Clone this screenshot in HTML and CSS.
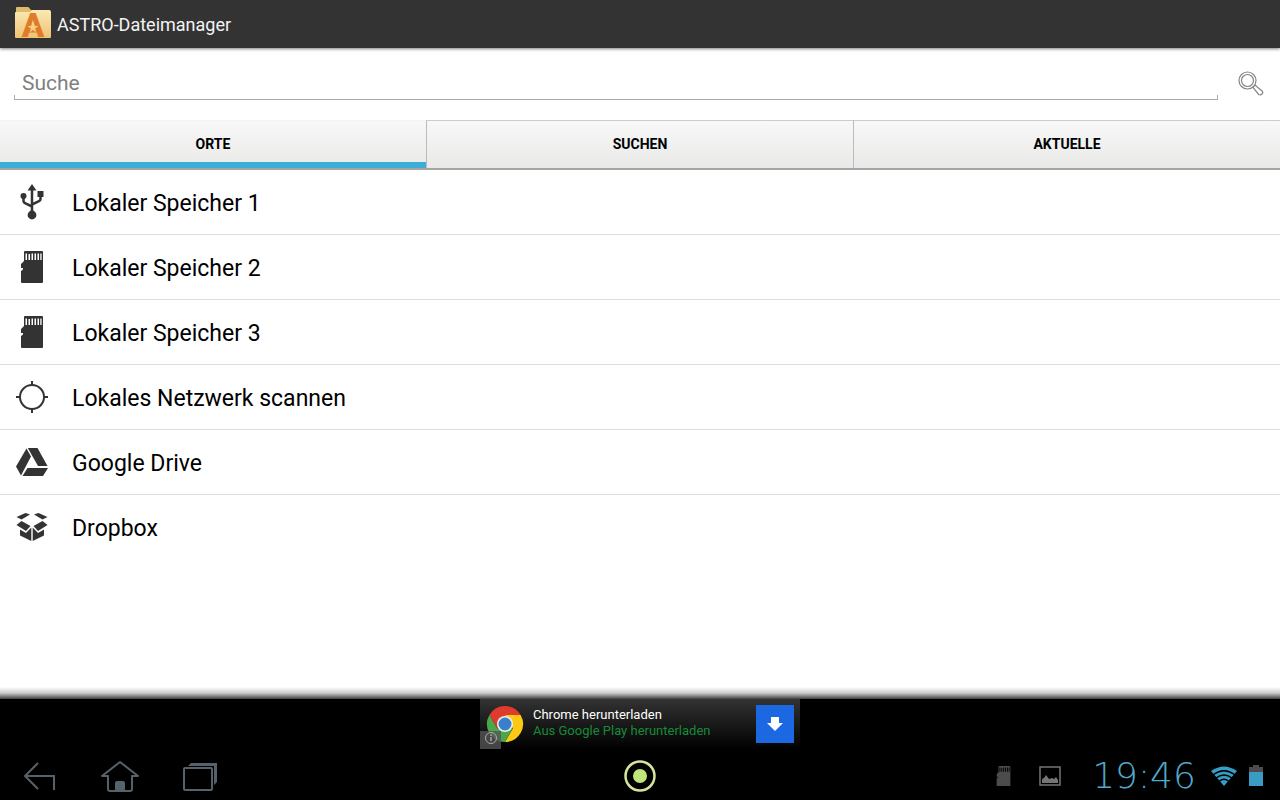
FILE: index.html
```
<!DOCTYPE html>
<html lang="de">
<head>
    <meta charset="UTF-8">
    <meta name="viewport" content="width=device-width, initial-scale=1.0">
    <title>ASTRO-Dateimanager</title>
    <link rel="stylesheet" href="styles.css">
</head>
<body>
    <!-- shared icon -->
    <svg class="sprite" aria-hidden="true">
        <symbol id="sd-card" viewBox="0 0 22 32">
            <path fill="currentColor" fill-rule="evenodd" d="M4 0H21Q22 0 22 1V31Q22 32 21 32H1Q0 32 0 31V20L2 18.500V17H0V13L3 10V1Q3 0 4 0ZM4.500 2.500V9H6V2.500ZM7.500 3V9H9V3ZM10.500 2.500V9H12V2.500ZM13.500 2.500V9H15V2.500ZM16.500 2.500V9H18V2.500ZM19.300 2.500V9H20.600V2.500Z"/>
        </symbol>
    </svg>

    <header class="app-bar">
        <svg class="app-logo" viewBox="0 0 38 34" aria-hidden="true">
            <defs>
                <linearGradient id="folder" x1="0" y1="0" x2="0" y2="1">
                    <stop offset="0" stop-color="#fbe9b4"/>
                    <stop offset="1" stop-color="#efc274"/>
                </linearGradient>
            </defs>
            <path fill="#dfb96c" d="M2 6V2Q2 1 3 1H14Q15 1 16 3L17 4H34Q36 4 36 6V12H2Z"/>
            <path fill="url(#folder)" d="M1 7Q1 6 2 6H16L18 4H35Q37 4 37 6V31Q37 32 36 32H2Q1 32 1 31Z"/>
            <text class="logo-letter" x="19" y="31" text-anchor="middle">A</text>
            <path fill="#f5d084" d="M19 16l1.300 4h4.200l-3.400 2.500 1.300 4-3.400-2.500-3.400 2.500 1.300-4-3.400-2.500h4.200z"/>
        </svg>
        <h1>ASTRO-Dateimanager</h1>
    </header>

    <form class="search">
        <div class="search-field">
            <input type="text" id="search" placeholder="Suche" aria-label="Suche">
        </div>
        <button type="button" class="search-button" aria-label="Suchen">
            <svg viewBox="0 0 26 26" fill="none" stroke="#858585" stroke-width="1.200">
                <circle cx="9.500" cy="9.500" r="8.500"/>
                <circle cx="9.500" cy="9.500" r="6"/>
                <path d="M15 16.500l2-2.500 7 6q1.500 1.500 0 3t-3.300.5z"/>
            </svg>
        </button>
    </form>

    <nav class="tabs">
        <button type="button" class="tab active">ORTE</button>
        <button type="button" class="tab">SUCHEN</button>
        <button type="button" class="tab">AKTUELLE</button>
    </nav>

    <main>
        <ul class="places">
            <li><a href="#">
                <svg class="place-icon" viewBox="0 0 32 36" fill="#333" stroke="#333">
                    <path stroke="none" d="M16 0l4.500 6.500h-9z"/>
                    <path stroke="none" d="M21.500 7h6v6h-6z"/>
                    <circle stroke="none" cx="7.500" cy="12" r="3"/>
                    <circle stroke="none" cx="16" cy="31" r="4.400"/>
                    <path fill="none" stroke-width="2.500" d="M16 5v24M7.500 12v5q0 1.500 1.500 2.200L16 22.500M24.500 12v3q0 1.500-1.500 2.200L16 20.500"/>
                </svg>
                <span>Lokaler Speicher 1</span>
            </a></li>
            <li><a href="#">
                <svg class="place-icon"><use href="#sd-card" x="5" y="2" width="22" height="32"/></svg>
                <span>Lokaler Speicher 2</span>
            </a></li>
            <li><a href="#">
                <svg class="place-icon"><use href="#sd-card" x="5" y="2" width="22" height="32"/></svg>
                <span>Lokaler Speicher 3</span>
            </a></li>
            <li><a href="#">
                <svg class="place-icon" viewBox="0 0 32 36" fill="none" stroke="#333" stroke-width="2">
                    <circle cx="16" cy="18" r="12"/>
                    <path d="M16 2v5M16 29v5M0 18h5M27 18h5"/>
                </svg>
                <span>Lokales Netzwerk scannen</span>
            </a></li>
            <li><a href="#">
                <svg class="place-icon" viewBox="0 0 32 36" fill="#333">
                    <path d="M10.500 4.500L15 12.500 5 31.500 0 22.500z"/>
                    <path d="M11.800 4H21.500L31.500 22H22z"/>
                    <path d="M11.500 24H32L27 32H6.500z"/>
                </svg>
                <span>Google Drive</span>
            </a></li>
            <li><a href="#">
                <svg class="place-icon" viewBox="0 0 32 36" fill="#333">
                    <path d="M.5 8L9.500 4 14 5.500 5.500 10.500zM31.500 8L22.500 4 18 5.500 26.500 10.500z"/>
                    <path d="M5.500 12L14.500 17 10 22 .5 16zM26.500 12L17.500 17 22 22 31.500 16z"/>
                    <path d="M4 20.500L10 24 15.300 18.500V32L4 26.500zM28 20.500L22 24 16.700 18.500V32L28 26.500z"/>
                </svg>
                <span>Dropbox</span>
            </a></li>
        </ul>
    </main>

    <div class="ad-strip">
        <a href="#" class="ad">
            <svg class="ad-logo" viewBox="0 0 44 50" aria-hidden="true">
                <path fill="#de3a2e" d="M25 25L17.200 29.500 9.400 16A18 18 0 0 1 40.600 16H25z"/>
                <path fill="#fbc914" d="M25 16H40.600A18 18 0 0 1 25 43L32.800 29.500z"/>
                <path fill="#4ba84a" d="M9.400 16A18 18 0 0 0 25 43L32.800 29.500 25 25 17.200 29.500z"/>
                <circle cx="25" cy="25" r="8" fill="#eee"/>
                <circle cx="25" cy="25" r="6.500" fill="#3a7fc9"/>
                <path fill="#555" fill-opacity=".8" d="M0 32H21V50H0z"/>
                <circle cx="11" cy="39" r="5.500" fill="none" stroke="#aaa"/>
                <path stroke="#aaa" stroke-width="1.500" d="M11 38v4M11 35.500v1.500"/>
            </svg>
            <span class="ad-text">
                <span class="ad-title">Chrome herunterladen</span>
                <span class="ad-source">Aus Google Play herunterladen</span>
            </span>
            <span class="ad-download">
                <svg viewBox="0 0 16 16" fill="#fff"><path d="M4 1h8v6h4l-8 8-8-8h4z"/></svg>
            </span>
        </a>
    </div>

    <footer class="system-bar">
        <div class="system-nav">
            <button type="button" aria-label="Zurück">
                <svg viewBox="0 0 40 34" fill="none" stroke="#56626a" stroke-width="2">
                    <path d="M18 4L5 17 18 30M5 17H34V31"/>
                </svg>
            </button>
            <button type="button" aria-label="Startseite">
                <svg viewBox="0 0 40 34" fill="none" stroke="#56626a" stroke-width="2">
                    <path stroke-linejoin="round" d="M20 3L2 17H8V30Q8 32 10 32H30Q32 32 32 30V17H38z"/>
                    <path fill="#56626a" stroke="none" d="M15 32V24Q15 22 17 22H23Q25 22 25 24V32z"/>
                </svg>
            </button>
            <button type="button" aria-label="Letzte Apps">
                <svg viewBox="0 0 40 34" fill="none" stroke="#56626a" stroke-width="2">
                    <rect x="4" y="9" width="28" height="22" rx="1"/>
                    <path fill="#56626a" stroke="none" d="M8 7L11 4H37V23L34 26V7z"/>
                </svg>
            </button>
        </div>
        <button type="button" class="center-button" aria-label="Menü">
            <svg viewBox="0 0 32 32">
                <circle cx="16" cy="16" r="14.500" fill="none" stroke="#d3e69b" stroke-width="2.500"/>
                <circle cx="16" cy="16" r="7" fill="#c0e57a"/>
            </svg>
        </button>
        <div class="status">
            <svg class="status-card"><use href="#sd-card" width="15" height="20"/></svg>
            <svg class="status-picture" viewBox="0 0 22 20">
                <rect x="1" y="1" width="20" height="18" fill="none" stroke="#757575" stroke-width="1.500"/>
                <path fill="#757575" d="M3 17V13L5 12 7 9 10 13 13 12 15 13 17 11 19 14V17z"/>
            </svg>
            <time class="clock">19:46</time>
            <svg class="status-wifi" viewBox="0 0 26 20">
                <path fill="#3a9cc4" d="M13 20L0 5Q13-4 26 5z"/>
                <path fill="none" stroke="#000" stroke-width="1.300" d="M2.500 8.500Q13 1 23.500 8.500M5 12Q13 6 21 12M8 15.500Q13 11 18 15.500"/>
            </svg>
            <svg class="status-battery" viewBox="0 0 14 21">
                <path fill="#4c4c4c" d="M4 0H10V2H14V7H0V2H4z"/>
                <path fill="#3a9cc4" d="M0 7H14V21H0z"/>
            </svg>
        </div>
    </footer>
</body>
</html>
```
FILE: styles.css
```
* {
    box-sizing: border-box;
    margin: 0;
    padding: 0;
}
body {
    font-family: Roboto, sans-serif;
    background-color: #fff;
    color: #000;
    display: flex;
    flex-direction: column;
    min-height: 100vh;
}
button {
    background: none;
    border: none;
    font-family: inherit;
    cursor: pointer;
}
a {
    color: inherit;
    text-decoration: none;
}
svg {
    display: block;
    flex-shrink: 0;
}
.sprite {
    position: absolute;
    width: 0;
    height: 0;
}
.app-bar {
    display: flex;
    align-items: center;
    gap: 5px;
    height: 48px;
    padding: 0 14px 2px;
    background-color: #333;
    box-shadow: 0 1px 3px rgba(0,0,0,0.5);
}
.app-logo {
    width: 38px;
    height: 34px;
    overflow: visible;
}
.logo-letter {
    font-size: 33px;
    font-weight: 900;
    fill: #e07b28;
}
h1 {
    padding-top: 3px;
    font-size: 18px;
    font-weight: 400;
    color: #f3f3f3;
}
.search {
    display: flex;
    align-items: center;
    gap: 20px;
    height: 72px;
    padding: 0 16px 0 14px;
}
.search-field {
    flex: 1;
    margin-bottom: 2px;
    background: linear-gradient(#aaa, #aaa) left bottom / 1px 4px no-repeat,
        linear-gradient(#aaa, #aaa) right bottom / 1px 4px no-repeat;
    border-bottom: 1px solid #aaa;
}
.search-field input {
    display: block;
    width: 100%;
    height: 33px;
    padding: 1px 8px 0;
    border: none;
    outline: none;
    background: none;
    font-family: inherit;
    font-size: 21px;
}
.search-field input::placeholder {
    color: #808080;
}
.search-button svg {
    width: 26px;
    height: 26px;
}
.tabs {
    display: flex;
    height: 50px;
    border-bottom: 2px solid #a5a5a5;
    background: linear-gradient(#f8f8f8, #e9e9e8);
}
.tab {
    flex: 1;
    padding-bottom: 2px;
    border-top: 1px solid #ccc;
    font-size: 14px;
    font-weight: 700;
}
.tab + .tab {
    border-left: 1px solid #bbb;
}
.tab.active {
    border-top-color: #f4f4f4;
    box-shadow: inset 0 -6px #3caed8;
}
main {
    flex: 1;
}
.places {
    list-style: none;
}
.places li {
    height: 65px;
    border-bottom: 1px solid #ddd;
}
.places li:last-child {
    border-bottom: none;
}
.places a {
    display: flex;
    align-items: center;
    gap: 24px;
    height: 64px;
    padding: 0 16px;
    font-size: 23px;
}
.places span {
    padding-top: 2px;
}
.place-icon {
    width: 32px;
    height: 36px;
    color: #333;
}
.ad-strip {
    display: flex;
    justify-content: center;
    background-color: #000;
}
.ad-strip::before {
    content: "";
    position: absolute;
    left: 0;
    right: 0;
    height: 12px;
    margin-top: -12px;
    background: linear-gradient(rgba(0,0,0,0), rgba(0,0,0,0.2) 50%, rgba(0,0,0,0.75));
}
.ad {
    display: flex;
    align-items: center;
    width: 320px;
    height: 50px;
    padding-right: 6px;
    background: linear-gradient(#333, #000);
}
.ad-logo {
    width: 44px;
    height: 50px;
}
.ad-text {
    flex: 1;
    display: flex;
    flex-direction: column;
    padding: 0 0 2px 9px;
    font-size: 13px;
    line-height: 16px;
}
.ad-title {
    color: #fff;
}
.ad-source {
    color: #178a38;
}
.ad-download {
    display: flex;
    align-items: center;
    justify-content: center;
    width: 38px;
    height: 38px;
    background-color: #1b68e2;
}
.ad-download svg {
    width: 16px;
    height: 16px;
}
.system-bar {
    display: grid;
    grid-template-columns: 1fr auto 1fr;
    align-items: center;
    height: 51px;
    padding: 2px 17px 0;
    background-color: #000;
}
.system-nav {
    display: flex;
    gap: 40px;
    padding-left: 3px;
}
.system-nav svg {
    width: 40px;
    height: 34px;
}
.center-button svg {
    width: 32px;
    height: 32px;
}
.status {
    display: flex;
    align-items: center;
    justify-content: flex-end;
    gap: 12px;
}
.status-card {
    width: 15px;
    height: 20px;
    margin-right: 16px;
    color: #4c4c4c;
}
.status-picture {
    width: 22px;
    height: 20px;
    margin-right: 16px;
}
.clock {
    min-width: 110px;
    font-family: "DejaVu Sans Light", "DejaVu Sans", sans-serif;
    font-size: 36px;
    font-weight: 200;
    line-height: 40px;
    text-align: center;
    color: #4fa9cc;
}
.status-wifi {
    width: 26px;
    height: 20px;
}
.status-battery {
    width: 14px;
    height: 21px;
}
```
